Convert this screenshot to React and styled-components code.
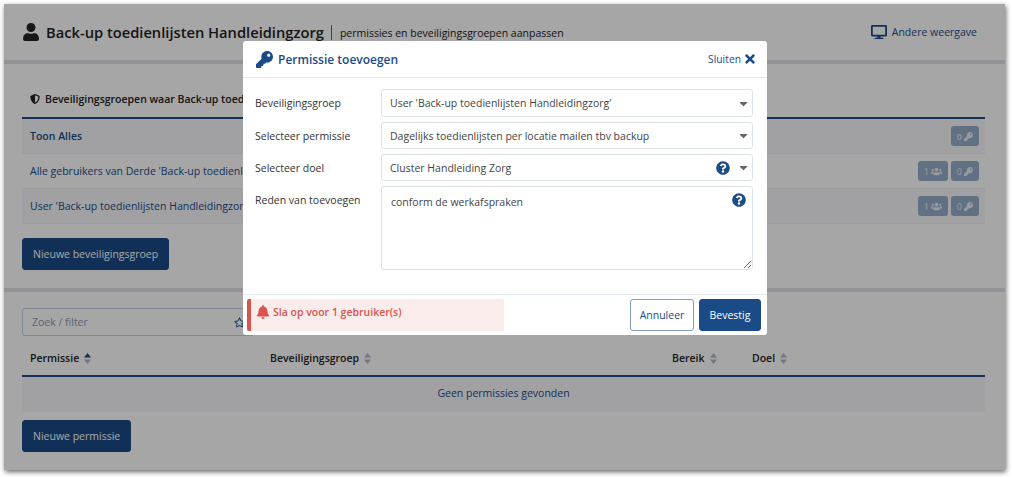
import React from "react";
import styled, { createGlobalStyle } from "styled-components";
import {
  FaUser,
  FaKey,
  FaShieldAlt,
  FaDesktop,
  FaUsers,
  FaBell,
  FaQuestionCircle,
  FaTimes,
  FaCaretDown,
  FaRegStar,
} from "react-icons/fa";

const Global = createGlobalStyle`
  html, body { margin: 0; padding: 0; background: #fff; }
  body { font-family: "Open Sans", "Liberation Sans", sans-serif; color: #2a2a2a; }
  * { box-sizing: border-box; }
`;

const navy = "#1b4b87";

const Stage = styled.div`
  width: 1012px;
  height: 477px;
  padding: 4px 7px 7px 4px;
`;

const Screen = styled.div`
  position: relative;
  height: 466px;
  background: #fff;
  box-shadow: 1px 2px 5px rgba(0, 0, 0, 0.6);
  display: flex;
  flex-direction: column;
  overflow: hidden;
`;

const Overlay = styled.div`
  position: absolute;
  inset: 0;
  background: rgba(0, 0, 0, 0.35);
`;

const PageHeader = styled.header`
  height: 60px;
  flex: none;
  display: flex;
  align-items: center;
  padding: 0 28px 0 18px;
  border-bottom: 4px solid #e0e2e6;
`;

const PageTitle = styled.h1`
  margin: 0 0 0 6px;
  font-size: 14.7px;
  font-weight: 600;
  color: #222;
`;

const Bar = styled.span`
  margin: 0 8px 0 7px;
  width: 1px;
  height: 15px;
  background: #3f6fa8;
`;

const PageSub = styled.span`
  font-size: 10.5px;
  margin-top: 2px;
  color: #222;
`;

const ViewLink = styled.a`
  margin-left: auto;
  display: flex;
  align-items: center;
  gap: 5px;
  font-size: 10.5px;
  color: ${navy};
`;

const Section = styled.section`
  flex: ${(p) => (p.$grow ? 1 : "none")};
  height: ${(p) => (p.$grow ? "auto" : "228px")};
  padding: ${(p) => (p.$grow ? "16px" : "24px")} 20px 0 18px;
  border-bottom: ${(p) => (p.$grow ? "none" : "4px solid #e0e2e6")};
`;

const GroupTitle = styled.h2`
  margin: 0;
  height: 31px;
  padding: 3px 0 0 8px;
  display: flex;
  align-items: flex-start;
  gap: 5px;
  font-size: 10.5px;
  font-weight: 600;
  color: #222;
  line-height: 16px;
  border-bottom: 2px solid ${navy};
  white-space: nowrap;
`;

const Row = styled.div`
  height: 35px;
  padding: 0 6px 0 8px;
  display: flex;
  align-items: center;
  justify-content: space-between;
  background: ${(p) => (p.$shade ? "#f7f8fa" : "#fff")};
  border-bottom: 1px solid #eef0f3;
  font-size: 10.5px;
  font-weight: ${(p) => (p.$bold ? 600 : 400)};
  color: ${navy};
`;

const Badges = styled.div`
  display: flex;
  gap: 3px;
`;

const Badge = styled.span`
  height: 20px;
  padding: 0 6px;
  display: flex;
  align-items: center;
  gap: 2px;
  background: #96adc9;
  border-radius: 3px;
  font-size: 9px;
  color: #e8edf3;
`;

const MainButton = styled.button`
  height: 32px;
  margin-top: ${(p) => p.$top}px;
  padding: 0 10px;
  background: ${navy};
  border: 1px solid ${navy};
  border-radius: 3px;
  font: 400 10.5px "Open Sans", sans-serif;
  color: #fff;
  display: block;
`;

const FilterField = styled.div`
  width: 232px;
  height: 28px;
  padding: 0 8px 0 9px;
  display: flex;
  align-items: center;
  justify-content: space-between;
  border: 1px solid #c4d2e3;
  border-radius: 3px;
  font-size: 10.5px;
  color: #8a9ab2;
`;

const TableHead = styled.div`
  margin-top: 9px;
  height: 32px;
  padding: 0 0 4px 8px;
  display: grid;
  grid-template-columns: 240px 402px 80px 1fr;
  align-items: center;
  border-bottom: 2px solid ${navy};
`;

const HeadCell = styled.span`
  display: flex;
  align-items: center;
  gap: 5px;
  font-size: 10.5px;
  font-weight: 600;
  color: #222;
`;

const EmptyRow = styled.div`
  height: 35px;
  padding-bottom: 3px;
  display: flex;
  align-items: center;
  justify-content: center;
  background: #f7f8fa;
  font-size: 10.5px;
  color: ${navy};
`;

const Modal = styled.div`
  position: absolute;
  left: 239px;
  top: 37px;
  width: 524px;
  height: 294px;
  background: #fff;
  border-radius: 3px;
  display: flex;
  flex-direction: column;
`;

const ModalHead = styled.div`
  height: 37px;
  flex: none;
  padding: 0 10px 0 13px;
  display: flex;
  align-items: center;
  gap: 5px;
  border-bottom: 1px solid #e3e9f1;
`;

const ModalTitle = styled.h3`
  margin: 0;
  font-size: 12px;
  font-weight: 600;
  color: ${navy};
`;

const CloseLink = styled.a`
  margin-left: auto;
  display: flex;
  align-items: center;
  gap: 2px;
  font-size: 10.3px;
  color: ${navy};
`;

const ModalBody = styled.div`
  flex: 1;
  padding: 11px 14px 0 12px;
  display: grid;
  grid-template-columns: 126px 1fr;
  grid-auto-rows: min-content;
  row-gap: 5px;
  align-content: start;
`;

const FieldLabel = styled.label`
  padding-top: 1px;
  font-size: 10.5px;
  line-height: 27px;
  height: 27px;
  color: #333;
`;

const SelectBox = styled.div`
  height: ${(p) => (p.$first ? 28 : 27)}px;
  padding: 0 2px 0 8px;
  display: flex;
  align-items: center;
  gap: 7px;
  border: 1px solid #dbe3ed;
  border-radius: 3px;
  font-size: 10.5px;
  color: #444;
`;

const SelectText = styled.span`
  flex: 1;
`;

const AreaWrap = styled.div`
  position: relative;
  height: 84px;
`;

const Area = styled.textarea`
  display: block;
  width: 100%;
  height: 84px;
  padding: 8px 9px;
  border: 1px solid #dbe3ed;
  border-radius: 3px;
  font: 400 10.5px "Open Sans", sans-serif;
  color: #444;
  resize: vertical;
  outline: none;
`;

const AreaHelp = styled.span`
  position: absolute;
  top: 7px;
  right: 7px;
  display: flex;
`;

const ModalFoot = styled.div`
  height: 41px;
  flex: none;
  padding: 4px 6px 4px 4px;
  display: flex;
  align-items: stretch;
  gap: 5px;
  border-top: 1px solid #e3e9f1;
`;

const Alert = styled.div`
  width: 257px;
  margin-right: auto;
  padding: 0 0 7px 5px;
  display: flex;
  align-items: center;
  gap: 3px;
  background: #faeceb;
  border-left: 4px solid #d9534f;
  border-radius: 2px;
  font-size: 10.5px;
  font-weight: 600;
  color: #d9534f;
`;

const FootButton = styled.button`
  padding: 0;
  width: ${(p) => p.$w}px;
  border: 1px solid ${(p) => (p.$primary ? navy : "#7f9cc2")};
  border-radius: 3px;
  background: ${(p) => (p.$primary ? navy : "#fff")};
  color: ${(p) => (p.$primary ? "#fff" : navy)};
  font: 400 10.5px "Open Sans", sans-serif;
`;

function SortIcon({ active }) {
  return (
    <svg width="7" height="11" viewBox="0 0 7 11">
      <polygon points="3.5,0 7,4.5 0,4.5" fill={active ? navy : "#aeb9c9"} />
      <polygon points="3.5,11 7,6.5 0,6.5" fill="#aeb9c9" />
    </svg>
  );
}

function Counts({ users }) {
  return (
    <Badges>
      {users && (
        <Badge>
          1 <FaUsers size={11} />
        </Badge>
      )}
      <Badge>
        0 <FaKey size={9} />
      </Badge>
    </Badges>
  );
}

export default function App() {
  return (
    <Stage>
      <Global />
      <Screen>
        <PageHeader>
          <FaUser size={18} color="#222" />
          <PageTitle>Back-up toedienlijsten Handleidingzorg</PageTitle>
          <Bar />
          <PageSub>permissies en beveiligingsgroepen aanpassen</PageSub>
          <ViewLink>
            <FaDesktop size={16} />
            Andere weergave
          </ViewLink>
        </PageHeader>

        <Section>
          <GroupTitle>
            <FaShieldAlt size={10} style={{ marginTop: 3 }} />
            Beveiligingsgroepen waar Back-up toedienlijsten Handleidingzorg lid van is
          </GroupTitle>
          <Row $bold $shade>
            Toon Alles
            <Counts />
          </Row>
          <Row>
            Alle gebruikers van Derde 'Back-up toedienlijsten Handleidingzorg'
            <Counts users />
          </Row>
          <Row $shade>
            User 'Back-up toedienlijsten Handleidingzorg'
            <Counts users />
          </Row>
          <MainButton $top={14}>Nieuwe beveiligingsgroep</MainButton>
        </Section>

        <Section $grow>
          <FilterField>
            Zoek / filter
            <FaRegStar size={11} color={navy} />
          </FilterField>
          <TableHead>
            <HeadCell>
              Permissie <SortIcon active />
            </HeadCell>
            <HeadCell>
              Beveiligingsgroep <SortIcon />
            </HeadCell>
            <HeadCell>
              Bereik <SortIcon />
            </HeadCell>
            <HeadCell>
              Doel <SortIcon />
            </HeadCell>
          </TableHead>
          <EmptyRow>Geen permissies gevonden</EmptyRow>
          <MainButton $top={8}>Nieuwe permissie</MainButton>
        </Section>

        <Overlay />

        <Modal>
          <ModalHead>
            <FaKey size={17} color={navy} />
            <ModalTitle>Permissie toevoegen</ModalTitle>
            <CloseLink>
              Sluiten
              <FaTimes size={14} />
            </CloseLink>
          </ModalHead>
          <ModalBody>
            <FieldLabel>Beveiligingsgroep</FieldLabel>
            <SelectBox $first>
              <SelectText>User 'Back-up toedienlijsten Handleidingzorg'</SelectText>
              <FaCaretDown size={13} color="#666" />
            </SelectBox>
            <FieldLabel>Selecteer permissie</FieldLabel>
            <SelectBox>
              <SelectText>Dagelijks toedienlijsten per locatie mailen tbv backup</SelectText>
              <FaCaretDown size={13} color="#666" />
            </SelectBox>
            <FieldLabel>Selecteer doel</FieldLabel>
            <SelectBox>
              <SelectText>Cluster Handleiding Zorg</SelectText>
              <FaQuestionCircle size={14} color={navy} />
              <FaCaretDown size={13} color="#666" />
            </SelectBox>
            <FieldLabel>Reden van toevoegen</FieldLabel>
            <AreaWrap>
              <Area defaultValue="conform de werkafspraken" />
              <AreaHelp>
                <FaQuestionCircle size={14} color={navy} />
              </AreaHelp>
            </AreaWrap>
          </ModalBody>
          <ModalFoot>
            <Alert>
              <FaBell size={14} />
              Sla op voor 1 gebruiker(s)
            </Alert>
            <FootButton $w={64}>Annuleer</FootButton>
            <FootButton $w={62} $primary>
              Bevestig
            </FootButton>
          </ModalFoot>
        </Modal>
      </Screen>
    </Stage>
  );
}
